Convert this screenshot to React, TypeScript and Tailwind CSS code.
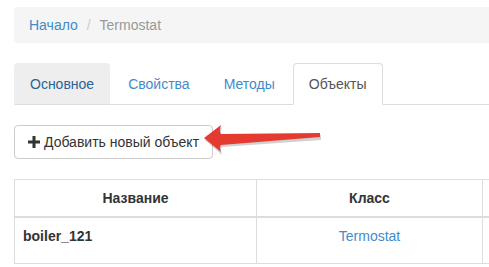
import React from "react";

const tabs = [
  { label: "Основное", hover: true },
  { label: "Свойства" },
  { label: "Методы" },
  { label: "Объекты", active: true },
];

const Arrow = () => (
  <svg
    className="absolute left-[196px] top-[118px]"
    width="132"
    height="40"
    viewBox="196 118 132 40"
  >
    <path
      d="M205,140 L222,127 Q220,134 222,136 L321,135 L321,140 L222,147 Q220,149 222,155 Z"
      fill="#000"
      opacity="0.18"
    />
    <path
      d="M204,138 L221,125 Q219,132 221,134 L320,133 L320,137 L221,145 Q219,147 221,152 Z"
      fill="#e53a2f"
    />
  </svg>
);

const App = () => {
  return (
    <div className="relative w-[489px] h-[267px] overflow-hidden bg-white font-['Liberation_Sans',Arial,sans-serif] text-[14px] leading-[20px] text-[#333]">
      <div className="w-[720px] pl-[14px] pt-[7px]">
        <ol className="flex h-[36px] items-center rounded-[4px] bg-[#f5f5f5] px-[15px]">
          <li className="text-[#428bca]">Начало</li>
          <li className="ml-[4px] text-[#999]">
            <span className="px-[5px] text-[#ccc]">/{"\u00a0"}</span>
            Termostat
          </li>
        </ol>

        <ul className="mt-[20px] flex border-b border-[#ddd]">
          {tabs.map((t) => (
            <li key={t.label} className="-mb-px mr-[2px]">
              <a
                className={
                  t.active
                    ? "block rounded-t-[4px] border border-[#ddd] border-b-transparent bg-white px-[15px] py-[10px] text-[#555]"
                    : t.hover
                    ? "block rounded-t-[4px] border border-[#eee] border-b-[#ddd] bg-[#eee] px-[15px] py-[10px] text-[#2a6496]"
                    : "block rounded-t-[4px] border border-transparent px-[15px] py-[10px] text-[#428bca]"
                }
              >
                {t.label}
              </a>
            </li>
          ))}
        </ul>

        <div className="mt-[20px]">
          <button className="flex h-[34px] w-[199px] items-center rounded-[4px] border border-[#ccc] bg-white px-[12px] text-[#333]">
            <svg width="12" height="12" viewBox="0 0 12 12" className="ml-[1px] mr-[4px]">
              <path d="M4.5 0h3v4.5H12v3H7.5V12h-3V7.5H0v-3h4.5z" fill="#333" />
            </svg>
            Добавить новый объект
          </button>
        </div>

        <table className="mt-[20px] table-fixed border-collapse">
          <colgroup>
            <col className="w-[242px]" />
            <col className="w-[226px]" />
            <col className="w-[230px]" />
          </colgroup>
          <thead>
            <tr>
              <th className="border border-b-2 border-[#ddd] p-[8px] text-center font-bold">Название</th>
              <th className="border border-b-2 border-[#ddd] p-[8px] text-center font-bold">Класс</th>
              <th className="border border-b-2 border-[#ddd] p-[8px]"></th>
            </tr>
          </thead>
          <tbody>
            <tr className="h-[46px]">
              <th className="border border-[#ddd] p-[8px] text-left align-top font-bold">boiler_121</th>
              <td className="border border-[#ddd] p-[8px] text-center align-top text-[#428bca]">Termostat</td>
              <td className="border border-[#ddd] p-[8px]"></td>
            </tr>
          </tbody>
        </table>
      </div>
      <Arrow />
    </div>
  );
};

export default App;
